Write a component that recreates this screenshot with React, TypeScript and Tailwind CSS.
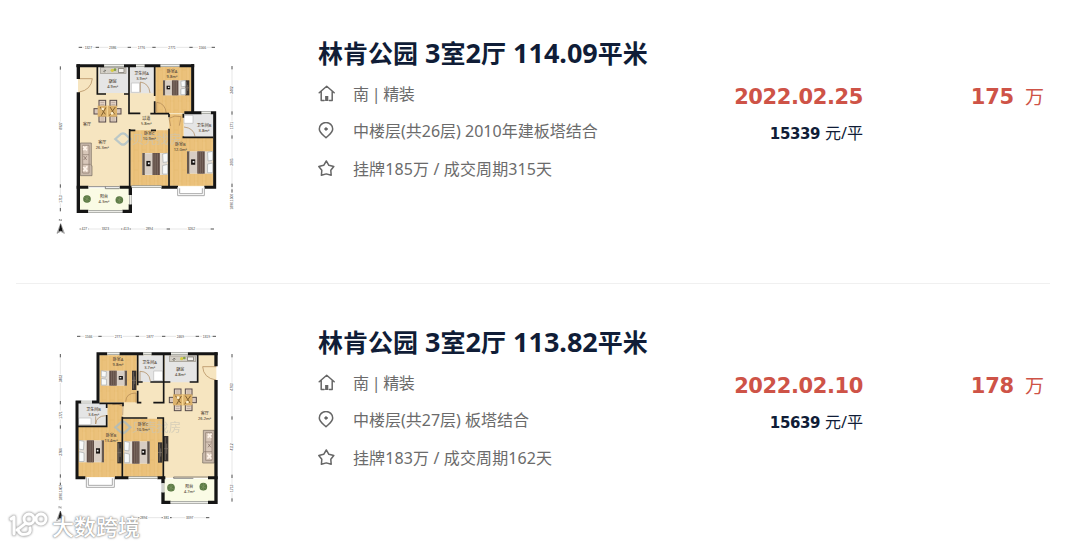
import type { ReactNode } from 'react';

type Pt = { x: number; y: number };

const Wall = ({ d, w = 9 }: { d: string; w?: number }) => (
  <path d={d} fill="none" stroke="#151515" strokeWidth={w} strokeLinecap="butt" />
);

const Label = ({ x, y, a, b }: Pt & { a: string; b?: string }) => (
  <g className="font-['Noto_Sans','Noto_Sans_CJK_SC',sans-serif]" fontSize="12" fill="#54493a" textAnchor="middle" fontWeight="500">
    <text x={x} y={y - 1}>{a}</text>
    {b && <text x={x} y={y + 14}>{b}</text>}
  </g>
);

const Bed = ({ x, y, w = 72, h = 66, flip = false }: Pt & { w?: number; h?: number; flip?: boolean }) => (
  <g transform={flip ? `translate(${x + w} ${y}) scale(-1 1)` : `translate(${x} ${y})`}>
    <rect width={w} height={h} fill="#e4dfd8" />
    <rect width={w * 0.1} height={h} fill="#65584f" />
    <rect x={w * 0.1} y="2" width={w * 0.3} height={h - 4} fill="#d8cec4" />
    <rect x={w * 0.16} y={h * 0.36} width={w * 0.16} height={h * 0.24} fill="#15110f" />
    <rect x={w * 0.22} y={h * 0.43} width={w * 0.07} height={h * 0.08} fill="#eee" />
    <rect x={w * 0.4} width={w * 0.29} height={h} fill="#604d46" />
    <path d={`M${w * 0.46} 1V${h}M${w * 0.53} 1V${h}M${w * 0.6} 1V${h}`} stroke="#87766b" strokeWidth="2" />
    <path d={`M${w * 0.8} 3L${w} 0V${h * 0.4}L${w * 0.82} ${h * 0.43}ZM${w * 0.8} ${h * 0.57}L${w} ${h * 0.52}V${h * 0.96}L${w * 0.8} ${h * 0.96}Z`} fill="#f8fafa" stroke="#a4a9aa" strokeWidth="2" />
  </g>
);

const Dining = ({ x, y }: Pt) => (
  <g transform={`translate(${x} ${y})`}>
    {[[18, 0], [51, 0], [18, 47], [51, 47]].map(([a, b]) => (
      <g key={`${a}-${b}`}>
        <rect x={a} y={b} width="20" height="18" fill="#e8d8ca" stroke="#564948" strokeWidth="3" />
        <path d={`M${a + 4} ${b + 6}h12M${a + 4} ${b + 12}h12`} stroke="#a48f83" strokeWidth="2" />
      </g>
    ))}
    <rect x="3" y="25" width="14" height="16" fill="#d9c8bc" stroke="#564948" strokeWidth="3" />
    <rect x="70" y="25" width="14" height="16" fill="#d9c8bc" stroke="#564948" strokeWidth="3" />
    <rect x="14" y="16" width="58" height="33" fill="#dcb26c" />
    <path d="M21 20l16 22M39 21l-14 25M51 20l14 22M67 20L49 46" stroke="#806030" strokeWidth="3" />
    <circle cx="29" cy="26" r="4" fill="#fff1cf" /><circle cx="57" cy="39" r="4" fill="#fff1cf" />
    <path d="M43 17v32" stroke="#f4d38f" strokeWidth="4" />
  </g>
);

const Sofa = ({ x, y, flip = false }: Pt & { flip?: boolean }) => (
  <g transform={flip ? `translate(${x + 35} ${y}) scale(-1 1)` : `translate(${x} ${y})`}>
    <path d="M0 0H33V68H35V98H0Z" fill="#c9b9ab" stroke="#74695f" strokeWidth="2" />
    <path d="M7 7H26V90H7ZM7 35H26M7 64H31" fill="#d8c7b9" stroke="#8b7a6e" strokeWidth="2" />
    <path d="M8 10l12 12M19 10L9 22M9 72l12 13M21 70L9 85" stroke="#fff4ea" strokeWidth="5" />
    <path d="M10 39l9 12M19 40l-9 11" stroke="#7a675d" strokeWidth="2" />
  </g>
);

const Plant = ({ x, y }: Pt) => (
  <g>
    <circle cx={x} cy={y} r="11.5" fill="#5c7a45" />
    <path d={`M${x - 9} ${y - 5}L${x + 9} ${y + 5}M${x - 7} ${y + 7}L${x + 7} ${y - 8}M${x} ${y - 11}V${y + 11}`} stroke="#7d9560" strokeWidth="2" />
  </g>
);

const Counter = ({ x, y }: Pt) => (
  <g>
    <rect x={x} y={y} width="77" height="17" fill="#d2cec5" stroke="#989389" strokeWidth="2" />
    <circle cx={x + 13} cy={y + 10} r="4" fill="#6c695f" /><path d={`M${x + 8} ${y + 7}l11 7`} stroke="#eee" strokeWidth="2" />
    <circle cx={x + 36} cy={y + 8} r="5" fill="#d8cc43" /><circle cx={x + 44} cy={y + 6} r="4" fill="#829f43" />
    <rect x={x + 54} y={y + 3} width="17" height="11" fill="#f3f1ed" stroke="#6c6962" strokeWidth="2" />
  </g>
);

const Cabinet = ({ x, y, h }: Pt & { h: number }) => (
  <g>
    <rect x={x} y={y} width="13" height={h} fill="#393431" />
    <path d={`M${x + 4} ${y + 4}v${h - 8}M${x + 8} ${y + h * 0.3}v${h * 0.4}M${x} ${y + h / 2}h13`} stroke="#81766b" strokeWidth="2" />
  </g>
);

const Door = ({ d }: { d: string }) => <path d={d} fill="none" stroke="#ab8252" strokeWidth="2" />;

const Window = ({ d }: { d: string }) => (
  <g fill="none">
    <path d={d} stroke="#999b95" strokeWidth="8" />
    <path d={d} stroke="#ecece7" strokeWidth="4" />
  </g>
);

const Mark = ({ x, y }: Pt) => (
  <g opacity=".7">
    <path d={`M${x - 23} ${y}L${x - 6} ${y - 15}Q${x} ${y - 19} ${x + 6} ${y - 15}L${x + 22} ${y}L${x + 6} ${y + 15}Q${x} ${y + 19} ${x - 6} ${y + 15}Z`} fill="none" stroke="#a3bccb" strokeWidth="7" />
    <text x={x + 26} y={y + 15} fontSize="37" fill="#c9c5b6" className="font-['Noto_Sans_CJK_SC',sans-serif]">贝壳找房</text>
  </g>
);

type Dim = { at: number; t: string; len: number };
const HDims = ({ y, items, ends }: { y: number; items: Dim[]; ends: number[] }) => (
  <g fontSize="10" fill="#444" className="font-['Liberation_Sans',sans-serif]">
    <path d={`M${ends[0]} ${y}H${ends[ends.length - 1]}`} stroke="#ccc" strokeWidth="1.5" />
    {ends.map((e) => <path key={e} d={`M${e - 5} ${y}h10`} stroke="#555" strokeWidth="3" />)}
    {items.map((i) => (
      <g key={i.at}>
        <rect x={i.at - i.len / 2 - 2} y={y - 5} width={i.len + 4} height="10" fill="#fff" />
        <text x={i.at} y={y + 4} textAnchor="middle">{i.t}</text>
      </g>
    ))}
  </g>
);

const VDims = ({ x, items, ends }: { x: number; items: Dim[]; ends: number[] }) => (
  <g fontSize="10" fill="#444" className="font-['Liberation_Sans',sans-serif]">
    <path d={`M${x} ${ends[0]}V${ends[ends.length - 1]}`} stroke="#ccc" strokeWidth="1.5" />
    {ends.map((e) => <path key={e} d={`M${x} ${e - 5}v10`} stroke="#555" strokeWidth="3" />)}
    {items.map((i) => (
      <g key={i.at} transform={`translate(${x} ${i.at}) rotate(-90)`}>
        <rect x={-i.len / 2 - 2} y="-5" width={i.len + 4} height="10" fill="#fff" />
        <text y="4" textAnchor="middle">{i.t}</text>
      </g>
    ))}
  </g>
);

const Compass = ({ x, y }: Pt) => (
  <g>
    <path d={`M${x - 4} ${y - 12}v-6l6 6v-6`} stroke="#555" strokeWidth="1.5" fill="none" />
    <path d={`M${x} ${y - 4}L${x - 11} ${y + 25}L${x} ${y + 19}L${x + 11} ${y + 25}Z`} fill="#fff" stroke="#444" strokeWidth="1.5" />
    <path d={`M${x} ${y - 4}L${x - 7} ${y + 21}L${x} ${y + 17}L${x + 7} ${y + 21}Z`} fill="#111" />
  </g>
);

const WoodDefs = ({ id }: { id: string }) => (
  <defs>
    <pattern id={id} width="24" height="60" patternUnits="userSpaceOnUse">
      <rect width="24" height="60" fill="#ebc17b" />
      <path d="M0 0V60M12 0V60M0 18H12M12 45H24" stroke="#e4b66c" strokeWidth="1.5" />
      <path d="M6 0V60" stroke="#efc987" strokeWidth="2" />
    </pattern>
  </defs>
);

const PlanA = () => (
  <svg viewBox="0 0 600 615" className="h-[205px] w-[200px]" aria-hidden="true">
    <WoodDefs id="woodA" />
    <path d="M84 92H428V234H494V454H84Z" fill="#f6e5c0" />
    <path d="M316 95H424V234H316ZM358 238H400V306H490V452H358ZM241 286H355V454H241Z" fill="url(#woodA)" />
    <path d="M146 95H236V174H146ZM240 95H312V175H240ZM402 237H492V307H402Z" fill="#e5e5e5" />
    <path d="M89 460H240V526H89Z" fill="#fafbe5" />
    <Counter x={151} y={98} />
    <Dining x={129} y={196} />
    <Sofa x={91} y={324} />
    <Cabinet x={405} y={136} h={45} />
    <Bed x={339} y={136} w={67} h={45} />
    <Bed x={277} y={354} w={76} h={66} />
    <Bed x={411} y={349} w={77} h={67} />
    <path d="M244 144h25v28h-25zM402 241h27v24h-27z" fill="#fff" stroke="#bbb" strokeWidth="2" />
    <Door d="M86 131H127Q123 165 88 171M271 172V141Q297 145 300 174M320 231V202Q346 204 349 236M362 273L357 250Q374 239 393 245L388 272M402 276Q431 279 435 304" />
    <Mark x={219} y={312} />
    <Wall d="M79 92H163M222 92H258M283 92H332M388 92H433M428 87V236M403 233H455M482 233H498M494 229V461M498 457H463M384 457H334M245 457H209M115 457H80" />
    <Wall d="M85 88V132M85 172V532M80 529H115M217 529H246M241 529V508M241 480V455" w={10} />
    <Wall d="M142 95V177H168M222 177H238M237 95V176M237 176V235H271M314 95V183M314 199V235M301 236H357M357 236V247M357 281V453M239 282V453M239 286H256M303 286H318M400 236V248M400 304V307H490" w={5} />
    <Window d="M163 92H222M258 92H283M332 92H388M455 233H482M241 480V508M115 529H217M245 455H334" />
    <path d="M383 457V482H463V457M389 460V476H457V460" fill="#fff" stroke="#aaa" strokeWidth="3" />
    <path d="M116 455H208M166 455V461H208" fill="none" stroke="#555" strokeWidth="2" />
    <Plant x={111} y={492} /><Plant x={208} y={495} />
    <Label x={188} y={146} a="厨房" b="4.9m²" />
    <Label x={275} y={122} a="卫生间A" b="3.9m²" />
    <Label x={366} y={114} a="卧室A" b="9.8m²" />
    <Label x={111} y={273} a="客厅" />
    <Label x={157} y={329} a="客厅" b="26.3m²" />
    <Label x={289} y={255} a="过道" b="5.8m²" />
    <Label x={298} y={302} a="卧室C" b="10.9m²" />
    <Label x={391} y={333} a="卧室B" b="12.0m²" />
    <Label x={462} y={278} a="卫生间B" b="3.8m²" />
    <Label x={162} y={490} a="阳台" b="4.3m²" />
    <HDims y={37} ends={[91, 142, 238, 312, 423, 490]} items={[{ at: 115, t: '1327', len: 22 }, { at: 188, t: '2386', len: 22 }, { at: 274, t: '1776', len: 22 }, { at: 366, t: '2771', len: 22 }, { at: 457, t: '1566', len: 22 }]} />
    <HDims y={582} ends={[94, 110, 219, 237, 355, 487]} items={[{ at: 103, t: '427', len: 18 }, { at: 166, t: '3323', len: 22 }, { at: 228, t: '413', len: 18 }, { at: 298, t: '2894', len: 22 }, { at: 424, t: '3262', len: 22 }]} />
    <VDims x={31} ends={[99, 453, 485, 524]} items={[{ at: 273, t: '8927', len: 22 }, { at: 492, t: '1713', len: 22 }]} />
    <VDims x={546} ends={[98, 234, 306, 451, 468]} items={[{ at: 165, t: '3462', len: 22 }, { at: 272, t: '1771', len: 22 }, { at: 381, t: '3665', len: 22 }, { at: 500, t: '1896,1506', len: 42 }]} />
    <Compass x={32} y={570} />
  </svg>
);

const PlanB = () => (
  <svg viewBox="0 -3 600 615" className="h-[205px] w-[200px]" aria-hidden="true">
    <WoodDefs id="woodB" />
    <path d="M147 87H499V458H82V232H147Z" fill="#f6e5c0" />
    <path d="M149 91H260V232H149ZM84 305H172V235H216V457H84ZM220 281H338V457H220Z" fill="url(#woodB)" />
    <path d="M266 91H340V171H266ZM345 91H441V172H345ZM84 234H172V302H84Z" fill="#e5e5e5" />
    <path d="M341 461H496V529H341Z" fill="#fafbe5" />
    <Counter x={359} y={93} />
    <Dining x={355} y={192} />
    <Sofa x={458} y={316} flip />
    <Cabinet x={246} y={137} h={58} />
    <Cabinet x={202} y={351} h={64} />
    <Cabinet x={324} y={352} h={61} />
    <Cabinet x={342} y={333} h={76} />
    <Bed x={154} y={137} w={77} h={45} flip />
    <Bed x={87} y={346} w={75} h={66} flip />
    <Bed x={223} y={349} w={76} h={67} flip />
    <path d="M311 138h27v29h-27zM86 279h37v20h-37z" fill="#fff" stroke="#bbb" strokeWidth="2" />
    <Door d="M499 125H458Q460 159 498 165M301 168Q297 139 270 139V168M258 233V204Q228 204 227 230M218 271L219 244Q205 233 187 239M167 272Q139 273 137 297M137 297V274" />
    <Mark x={219} y={307} />
    <Wall d="M142 86H172M208 86H280M304 86H363M413 86H503M144 82V234M148 231H126M94 231H77M81 227V463M77 458H106M195 458H236M322 458H346M474 458H503" />
    <Wall d="M498 82V124M498 165V537M502 532H474M362 532H334M339 536V502M339 475V455" w={10} />
    <Wall d="M263 90V181M263 197V233H274M341 90V233H310M343 171H361M419 171H443V90M265 171H278M301 171H341M148 235H219V244M170 235V249M170 270V304H84M217 275V456M217 279H292M321 279H340V456" w={5} />
    <Window d="M172 86H208M280 86H304M363 86H413M94 231H126M236 458H322M339 475V502M362 532H474" />
    <path d="M109 457V487H193V457M115 460V481H187V460" fill="#fff" stroke="#aaa" strokeWidth="3" />
    <path d="M371 456H474M371 456V460H430" fill="none" stroke="#555" strokeWidth="2" />
    <Plant x={363} y={488} /><Plant x={460} y={485} />
    <Label x={204} y={110} a="卧室A" b="9.8m²" />
    <Label x={299} y={119} a="卫生间A" b="3.7m²" />
    <Label x={391} y={138} a="厨房" b="4.8m²" />
    <Label x={464} y={271} a="客厅" b="26.2m²" />
    <Label x={131} y={260} a="卫生间B" b="3.6m²" />
    <Label x={183} y={336} a="卧室B" b="13.4m²" />
    <Label x={279} y={303} a="卧室C" b="10.9m²" />
    <Label x={418} y={490} a="阳台" b="4.7m²" />
    <HDims y={34} ends={[86, 150, 262, 341, 442, 493]} items={[{ at: 116, t: '1566', len: 22 }, { at: 205, t: '2771', len: 22 }, { at: 300, t: '1877', len: 22 }, { at: 391, t: '2469', len: 22 }, { at: 469, t: '1319', len: 22 }]} />
    <HDims y={578} ends={[270, 340, 360, 473]} items={[{ at: 281, t: '2894', len: 22 }, { at: 349, t: '381', len: 18 }, { at: 419, t: '3397', len: 22 }]} />
    <VDims x={31} ends={[92, 233, 306, 453, 478]} items={[{ at: 161, t: '3462', len: 22 }, { at: 270, t: '1771', len: 22 }, { at: 381, t: '3704', len: 22 }, { at: 503, t: '1896,1407', len: 42 }]} />
    <VDims x={546} ends={[92, 279, 454, 525]} items={[{ at: 186, t: '4763', len: 22 }, { at: 366, t: '4112', len: 22 }, { at: 490, t: '1713', len: 22 }]} />
    <Compass x={31} y={562} />
  </svg>
);

const iconProps = {
  viewBox: '0 0 18 18', fill: 'none', stroke: '#666', strokeWidth: 1.5,
  strokeLinejoin: 'round' as const, strokeLinecap: 'round' as const, 'aria-hidden': true,
  className: 'h-[18px] w-[18px] shrink-0',
};
const HomeIcon = () => (
  <svg {...iconProps}>
    <path d="M1.2 7.8L8.7 1.2L16.2 7.8M3.2 6.5V15.4H6.1M14.2 6.5V15.4H11.3" />
    <path d="M8.7 16V11" strokeWidth="3.2" strokeLinecap="butt" />
  </svg>
);
const PinIcon = () => (
  <svg {...iconProps}>
    <path d="M8 15.8C5.3 13.1 1.3 10.6 1.3 7A6.7 6.5 0 0 1 14.7 7C14.7 10.6 10.7 13.1 8 15.8Z" />
    <circle cx="8" cy="7" r="1.3" fill="#666" strokeWidth=".8" />
  </svg>
);
const StarIcon = () => (
  <svg {...iconProps}>
    <path d="M8.3 1L10.9 5.3L15.8 6.5L12.8 10.3L13.2 15.3L8.3 13.9L3.4 15.3L3.8 10.3L.8 6.5L5.7 5.3Z" />
  </svg>
);

const Info = ({ icon, children }: { icon: ReactNode; children: ReactNode }) => (
  <li className="flex h-[37.5px] items-center gap-[17px] whitespace-pre text-base leading-6 text-[#6b6b6b]">
    {icon}
    {children}
  </li>
);

/* Digits in the heading run slightly larger than the Chinese characters. */
const Title = ({ text }: { text: string }) => (
  <h2 className="flex h-9 items-baseline whitespace-pre text-[25px] font-bold leading-9 text-[#101d37]">
    {text.split(/([\d. ]+)/).map((part, i) => (
      <span key={i} className={/^[\d. ]+$/.test(part) ? 'text-[27px]' : ''}>{part}</span>
    ))}
  </h2>
);

type Listing = { plan: ReactNode; title: string; face: string[]; floor: string; deal: string; date: string; unit: string; total: string };
const listings: Listing[] = [
  { plan: <PlanA />, title: '林肯公园 3室2厅 114.09平米', face: ['南', '精装'], floor: '中楼层(共26层) 2010年建板塔结合', deal: '挂牌185万 / 成交周期315天', date: '2022.02.25', unit: '15339', total: '175' },
  { plan: <PlanB />, title: '林肯公园 3室2厅 113.82平米', face: ['南', '精装'], floor: '中楼层(共27层) 板塔结合', deal: '挂牌183万 / 成交周期162天', date: '2022.02.10', unit: '15639', total: '178' },
];

const Row = ({ item }: { item: Listing }) => (
  <article className="flex h-[289px] shrink-0 items-start border-b border-[#f0f0f0] pl-[34px] pt-10 last:border-transparent">
    {item.plan}
    <div className="ml-[68px] w-[400px] shrink-0">
      <Title text={item.title} />
      <ul className="mt-[4px]">
        <Info icon={<HomeIcon />}><span className="tracking-[-0.7px]">{item.face.join(' | ')}</span></Info>
        <Info icon={<PinIcon />}><span>{item.floor}</span></Info>
        <Info icon={<StarIcon />}><span className="tracking-[0.12px]">{item.deal}</span></Info>
      </ul>
    </div>
    <div className="w-[145px] shrink-0 pt-[46px] text-right">
      <p className="font-['DejaVu_Sans',sans-serif] text-[21px] font-bold leading-8 tracking-[-0.4px] text-[#ce5347]">{item.date}</p>
      <p className="mt-[8px] flex items-baseline justify-end gap-[5px] text-base leading-6 text-[#101d37]">
        <span className="font-['DejaVu_Sans',sans-serif] text-[15px] font-bold tracking-[-0.4px]">{item.unit}</span>
        <span>元/平</span>
      </p>
    </div>
    <div className="flex flex-1 items-baseline justify-end gap-[11px] pr-[6px] pt-[46px] leading-8 text-[#ce5347]">
      <span className="font-['DejaVu_Sans',sans-serif] text-[21px] font-bold tracking-[-0.2px]">{item.total}</span>
      <span className="text-[19px]">万</span>
    </div>
  </article>
);

const Watermark = () => (
  <div className="absolute bottom-[4px] left-[9px] flex h-8 items-center gap-[3px]">
    <svg viewBox="0 0 40 32" className="h-8 w-10 overflow-visible drop-shadow-[0_0_1px_#999]" fill="none" strokeLinecap="round" strokeLinejoin="round" aria-hidden="true">
      <g stroke="#ccc" strokeWidth="4">
        <path d="M2 9L5 7V24M17 13L8 20M9 19Q10 26 18 24Q22 23 21 18" />
        <circle cx="20" cy="9" r="5" /><circle cx="32" cy="9" r="5" />
      </g>
      <g stroke="#fff" strokeWidth="2.8">
        <path d="M2 9L5 7V24M17 13L8 20M9 19Q10 26 18 24Q22 23 21 18" />
        <circle cx="20" cy="9" r="5" /><circle cx="32" cy="9" r="5" />
      </g>
    </svg>
    <span className="text-[22px] font-medium leading-8 text-white [text-shadow:0_0_1px_#888,0_0_2px_#999,0_0_3px_#bbb]">大数跨境</span>
  </div>
);

export default function App() {
  return (
    <main className="relative h-[546px] w-[1080px] overflow-hidden bg-white font-['Noto_Sans','Noto_Sans_CJK_SC',sans-serif]">
      <section className="-mt-[5px] ml-4 flex w-[1034px] flex-col">
        {listings.map((item) => <Row key={item.title} item={item} />)}
      </section>
      <Watermark />
    </main>
  );
}
